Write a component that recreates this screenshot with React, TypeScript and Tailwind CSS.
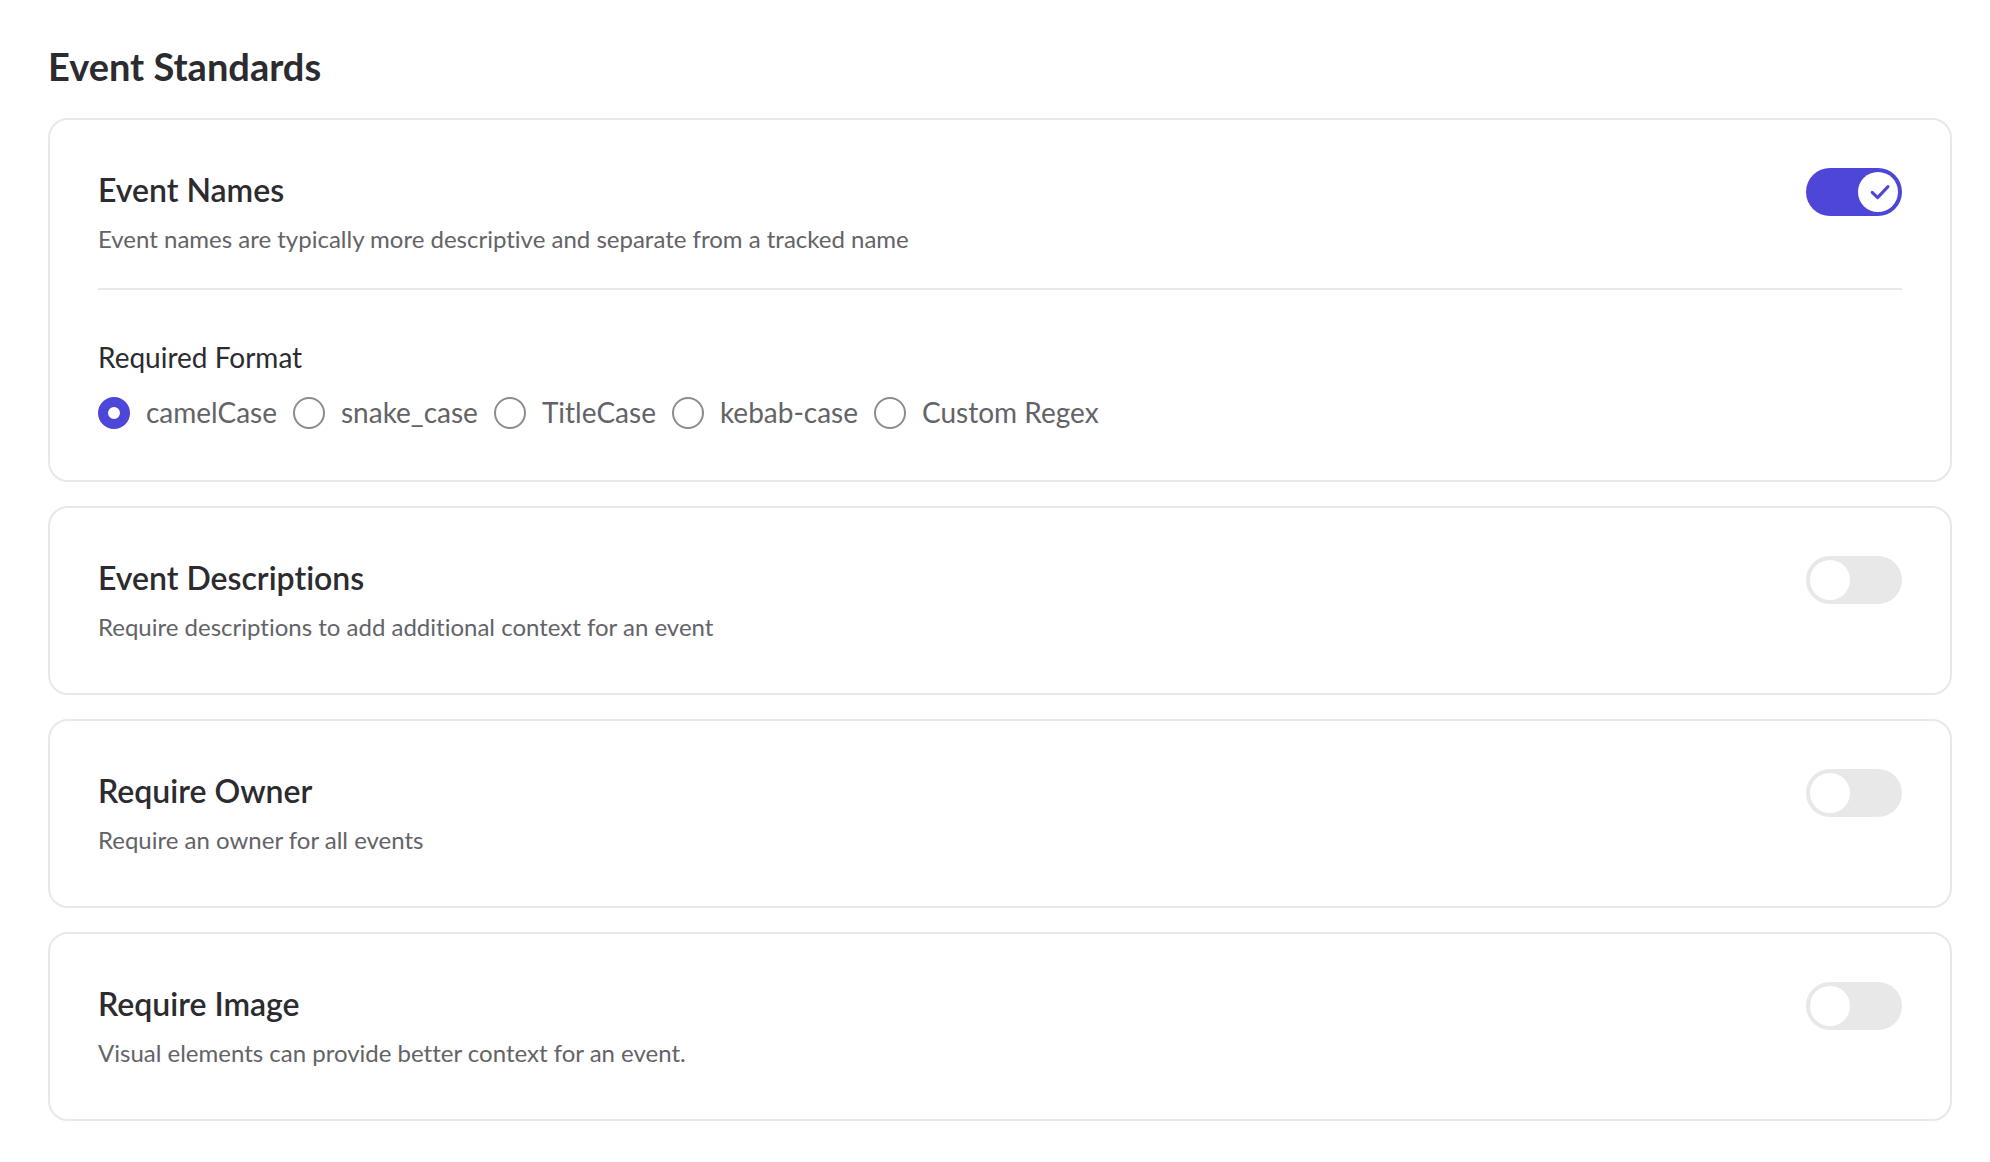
import { useId, useState, type ReactNode } from "react";

function Toggle({ labelledBy, initial = false }: { labelledBy: string; initial?: boolean }) {
  const [on, setOn] = useState(initial);
  return (
    <button
      type="button"
      role="switch"
      aria-checked={on}
      aria-labelledby={labelledBy}
      onClick={() => setOn(!on)}
      className={`flex h-12 w-24 shrink-0 cursor-pointer items-center rounded-full p-1 ${
        on ? "justify-end bg-[#4e45d9]" : "justify-start bg-[#e8e8e8]"
      }`}
    >
      <span className="size-10 rounded-full bg-white">
        {on && (
          <svg viewBox="0 0 40 40" className="size-10" fill="none" aria-hidden="true">
            <path
              d="M14.2 20.4 L19.6 25.6 L30 14.6"
              stroke="#4e45d9"
              strokeWidth="3"
              strokeLinecap="round"
              strokeLinejoin="round"
            />
          </svg>
        )}
      </span>
    </button>
  );
}

function StandardCard({
  title,
  description,
  enabled,
  children,
}: {
  title: string;
  description: string;
  enabled?: boolean;
  children?: ReactNode;
}) {
  const titleId = useId();
  return (
    <section className="rounded-[20px] border-2 border-[#e8e8e8] p-12">
      <div className="flex items-start justify-between gap-8">
        <div>
          <h2 id={titleId} className="text-[32px] leading-[43px] font-semibold text-[#2b2b30]">
            {title}
          </h2>
          <p className="mt-2.5 text-2xl leading-9 text-[#636367]">{description}</p>
        </div>
        <Toggle labelledBy={titleId} initial={enabled} />
      </div>
      {children}
    </section>
  );
}

const formats = ["camelCase", "snake_case", "TitleCase", "kebab-case", "Custom Regex"];

function FormatPicker() {
  const [selected, setSelected] = useState("camelCase");
  const labelId = useId();
  return (
    <div
      role="radiogroup"
      aria-labelledby={labelId}
      className="mt-[31px] border-t-2 border-[#e8e8e8] pt-[46px]"
    >
      <h3 id={labelId} className="text-[28px] leading-[42px] text-[#2b2b30]">
        Required Format
      </h3>
      <div className="mt-4 flex flex-wrap gap-x-4">
        {formats.map((format) => (
          <label key={format} className="flex cursor-pointer items-center gap-4 text-[28px] leading-9 text-[#636367]">
            <input
              type="radio"
              name="format"
              value={format}
              checked={selected === format}
              onChange={() => setSelected(format)}
              className="size-8 shrink-0 appearance-none rounded-full border-2 border-[#8c8c8e] bg-white checked:border-10 checked:border-[#4e45d9]"
            />
            <span className="pb-0.5">{format}</span>
          </label>
        ))}
      </div>
    </div>
  );
}

export default function App() {
  return (
    <main className="min-h-screen bg-white pt-10 pr-[38px] pb-10 pl-12 font-['Lato',sans-serif] [font-variant-ligatures:none]">
      <h1 className="mb-[26px] text-[38px] leading-[52px] font-bold text-[#2b2b30]">Event Standards</h1>
      <div className="flex flex-col gap-6">
        <StandardCard
          title="Event Names"
          description="Event names are typically more descriptive and separate from a tracked name"
          enabled
        >
          <FormatPicker />
        </StandardCard>
        <StandardCard
          title="Event Descriptions"
          description="Require descriptions to add additional context for an event"
        />
        <StandardCard title="Require Owner" description="Require an owner for all events" />
        <StandardCard title="Require Image" description="Visual elements can provide better context for an event." />
      </div>
    </main>
  );
}
